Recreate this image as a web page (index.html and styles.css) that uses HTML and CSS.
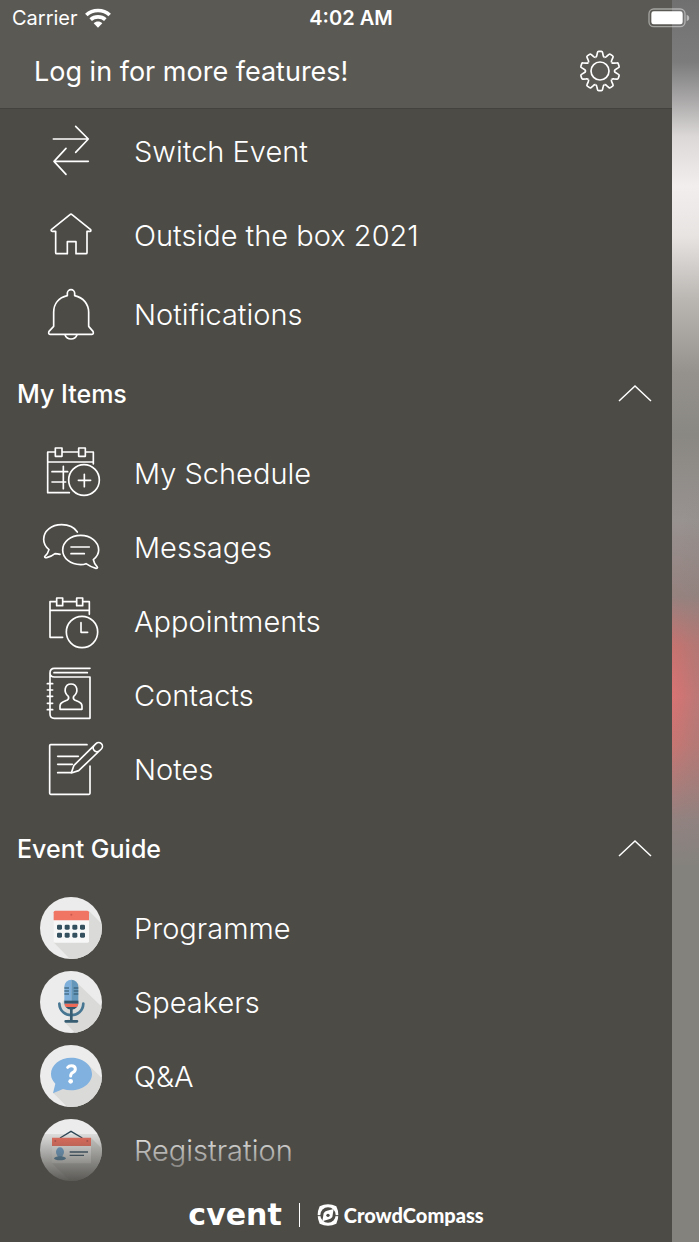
FILE: index.html
```html
<!DOCTYPE html>
<html lang="en">
<head>
<meta charset="utf-8">
<meta name="viewport" content="width=device-width, initial-scale=1">
<title>Event menu</title>
<link rel="stylesheet" href="styles.css">
</head>
<body>
<div class="screen">
  <div class="status">
    <div class="carrier">Carrier
      <svg class="wifi" viewBox="0 0 78 58" aria-hidden="true"><path d="M4 20C23 2 55 2 74 20M17 34C29 23 49 23 61 34"/><path class="dot" d="M26 45C33 38 45 38 52 45L39 58Z"/></svg>
    </div>
    <div class="time">4:02 AM</div>
    <svg class="battery" viewBox="0 0 126 60" aria-hidden="true"><rect class="case" x="3" y="3" width="108" height="53" rx="14"/><rect class="charge" x="10" y="10" width="94" height="39" rx="7"/><path class="nub" d="M116 20Q124 23 124 30T116 40Z"/></svg>
  </div>

  <div class="drawer">
    <header class="header">
      <a class="login" href="#login">Log in for more features!</a>
      <button class="settings" type="button" aria-label="Settings">
        <svg viewBox="-63 -63 126 126" aria-hidden="true">
          <defs><path id="tooth" d="M-13.3 -41Q-10 -43 -9.5 -47L-7.5 -56Q-7 -59 -4 -59H4Q7 -59 7.500 -56L9.500 -47Q10 -43 13.300 -41"/></defs>
          <use href="#tooth"/><use href="#tooth" transform="rotate(36)"/><use href="#tooth" transform="rotate(72)"/><use href="#tooth" transform="rotate(108)"/><use href="#tooth" transform="rotate(144)"/><use href="#tooth" transform="rotate(180)"/><use href="#tooth" transform="rotate(216)"/><use href="#tooth" transform="rotate(252)"/><use href="#tooth" transform="rotate(288)"/><use href="#tooth" transform="rotate(324)"/>
          <circle r="27"/>
        </svg>
      </button>
    </header>

    <nav class="menu">
      <a class="item tall" href="#switch">
        <svg class="icon line" viewBox="0 0 186 186" aria-hidden="true"><path d="M40 57H145M107 19L145 57L107 97M145 124H43M78 85L42 124L78 163"/></svg>
        <span>Switch Event</span>
      </a>
      <a class="item tall" href="#home">
        <svg class="icon line" viewBox="0 0 186 186" aria-hidden="true"><path d="M90 32Q93 29 96 32L152 77Q154 82 150 82H141V146Q141 149 138 149H108V113H82V149H50Q47 149 47 146V82H37Q32 82 34 77Z"/></svg>
        <span>Outside the box 2021</span>
      </a>
      <a class="item" href="#notifications">
        <svg class="icon line" viewBox="0 0 186 186" aria-hidden="true"><path d="M82 38V31A11 11 0 0 1 104 31V38C130 44 146 63 146 88V130L159 145Q162 154 156 154H30Q24 154 27 145L41 130V88C41 63 56 44 82 38ZM75 156Q80 168 93 168Q106 168 111 156"/></svg>
        <span>Notifications</span>
      </a>

      <button class="section" type="button" aria-expanded="true">My Items
        <svg class="chevron" viewBox="0 0 34 20" aria-hidden="true"><path d="M1 17L17 2L33 17"/></svg>
      </button>
      <a class="item" href="#schedule">
        <svg class="icon line" viewBox="0 0 186 186" aria-hidden="true"><path d="M46 30H23V152H88M66 30H116M136 30H160V66M23 60H160M46 18H66V43H46ZM116 18H136V43H116ZM36 89H83M36 120H77M70 73V140M115 115H152M133 97V134"/><circle cx="132" cy="114" r="46"/></svg>
        <span>My Schedule</span>
      </a>
      <a class="item" href="#messages">
        <svg class="icon line" viewBox="0 0 186 186" aria-hidden="true"><path d="M112 48C103 34 86 26 65 26C34 26 11 45 11 70C11 83 17 93 27 101Q24 113 14 122Q14 126 20 125Q34 122 45 113Q52 113 60 115M160 131C170 123 176 113 176 102C176 77 152 58 122 58C92 58 68 77 68 102C68 127 92 146 122 146Q131 146 138 143Q152 153 168 157Q174 157 172 153Q162 143 160 131ZM93 93H148M93 113H133"/></svg>
        <span>Messages</span>
      </a>
      <a class="item" href="#appointments">
        <svg class="icon line" viewBox="0 0 186 186" aria-hidden="true"><path d="M50 35H30V142H68M68 35H110M128 35H148V73M30 61H148M50 24H68V47H50ZM110 24H128V47H110ZM123 98V127H143"/><circle cx="126" cy="126" r="47"/></svg>
        <span>Appointments</span>
      </a>
      <a class="item" href="#contacts">
        <svg class="icon line" viewBox="0 0 186 186" aria-hidden="true"><path d="M150 13H43Q30 13 30 27V150Q30 163 43 163H150V39H43Q30 39 30 27M42 26H142M22 59H38M22 78H38M22 97H38M22 118H38M22 137H38M60 136V126Q60 117 70 113L82 108Q88 104 85 97C69 84 74 60 93 60C112 60 117 84 101 97Q98 104 104 108L116 113Q126 117 126 126V136Z"/></svg>
        <span>Contacts</span>
      </a>
      <a class="item" href="#notes">
        <svg class="icon line" viewBox="0 0 186 186" aria-hidden="true"><path d="M141 20H32Q29 20 29 23V166Q29 169 32 169H147Q150 169 150 166V84M53 55H115M53 79H97M53 104H94L102 82L168 17A11 11 0 0 1 184 33L116 98L94 105M163 22A11 11 0 0 0 179 38"/></svg>
        <span>Notes</span>
      </a>

      <button class="section" type="button" aria-expanded="true">Event Guide
        <svg class="chevron" viewBox="0 0 34 20" aria-hidden="true"><path d="M1 17L17 2L33 17"/></svg>
      </button>
      <a class="item" href="#programme">
        <svg class="icon" viewBox="0 0 186 186" aria-hidden="true">
          <defs><clipPath id="disc"><circle cx="93" cy="93" r="93"/></clipPath></defs>
          <g clip-path="url(#disc)"><rect width="186" height="186" fill="#ececec"/><path d="M147 42L186 81V186H90L42 137Z" fill="#dadad8"/></g>
          <path d="M41 68H147V133Q147 137 143 137H45Q41 137 41 133Z" fill="#f7f7f7"/><path d="M41 70V46Q41 41 46 41H142Q147 41 147 46V70Z" fill="#f17563"/><circle cx="94" cy="53" r="3" fill="#c95a50"/>
          <g fill="#34505f"><rect x="51" y="83" width="15" height="15" rx="4"/><rect x="74" y="83" width="15" height="15" rx="4"/><rect x="97" y="83" width="15" height="15" rx="4"/><rect x="120" y="83" width="15" height="15" rx="4"/><rect x="51" y="107" width="15" height="15" rx="4"/><rect x="74" y="107" width="15" height="15" rx="4"/><rect x="97" y="107" width="15" height="15" rx="4"/><rect x="120" y="107" width="15" height="15" rx="4"/></g>
        </svg>
        <span>Programme</span>
      </a>
      <a class="item" href="#speakers">
        <svg class="icon" viewBox="0 0 186 186" aria-hidden="true">
          <g clip-path="url(#disc)"><rect width="186" height="186" fill="#ececec"/><path d="M108 32L186 108V186H106L74 154L90 138L60 105Z" fill="#dadad8"/></g>
          <path d="M73 47A21 21 0 0 1 94 26V115A21 18 0 0 1 73 97Z" fill="#7fb0dc"/><path d="M94 26A21 21 0 0 1 115 47V97A21 18 0 0 1 94 115Z" fill="#6597ba"/>
          <path d="M73 51H87M73 60H87M73 69H87M101 51H115M101 60H115M101 69H115" stroke="#2f5064" stroke-width="3"/>
          <path d="M73 89H115V98H73Z" fill="#34566a"/><path d="M73 98H115Q114 104 111 108H77Q74 104 73 98Z" fill="#ef6a57"/><path d="M77 108H111Q105 116 94 116T77 108Z" fill="#34566a"/>
          <path d="M58 98C60 144 128 144 130 98" fill="none" stroke="#467692" stroke-width="8" stroke-linecap="round"/><path d="M94 114V149M77 151H111" stroke="#365d72" stroke-width="8" stroke-linecap="round"/>
        </svg>
        <span>Speakers</span>
      </a>
      <a class="item" href="#qa">
        <svg class="icon" viewBox="0 0 186 186" aria-hidden="true">
          <g clip-path="url(#disc)"><rect width="186" height="186" fill="#ececec"/><path d="M140 54L186 100V186H82L40 144Z" fill="#dadad8"/></g>
          <path d="M39 145L46 116Q33 103 33 87C33 60 60 38 94 38S156 60 156 87S128 136 94 136Q80 136 69 132Z" fill="#80b1df"/>
          <path d="M83 67Q87 62 94 62Q106 62 106 72Q106 79 98 83Q92 86 92 93" fill="none" stroke="#fff" stroke-width="9" stroke-linecap="round"/><circle cx="92" cy="109" r="7" fill="#fff"/>
        </svg>
        <span>Q&amp;A</span>
      </a>
      <a class="item" href="#registration">
        <svg class="icon" viewBox="0 0 186 186" aria-hidden="true">
          <g clip-path="url(#disc)"><rect width="186" height="186" fill="#ececec"/><path d="M153 56L186 89V186H90L36 133Z" fill="#d6d6d4"/></g>
          <path d="M60 57L93 37L127 57" fill="none" stroke="#2c4656" stroke-width="4"/><path d="M36 78H153V133H36Z" fill="#f5f5f5"/><path d="M36 56H153V81H36Z" fill="#f0705f"/><circle cx="46" cy="66" r="3" fill="#b8584e"/><circle cx="142" cy="66" r="3" fill="#b8584e"/>
          <g fill="#70a8d8"><ellipse cx="60" cy="99" rx="12" ry="14"/><path d="M53 105H67V118H53Z"/></g><ellipse cx="60" cy="118" rx="18" ry="6" fill="#4a84ac"/>
          <path d="M89 99H144M89 109H132" stroke="#34506a" stroke-width="4"/>
        </svg>
        <span>Registration</span>
      </a>
    </nav>

    <footer class="footer">
      <span class="cvent">cvent</span>
      <span class="divider"></span>
      <span class="crowd">
        <svg viewBox="0 0 66 66" aria-hidden="true"><path class="badge" d="M8 7Q33 -5 58 7Q70 33 58 59Q33 71 8 59Q-4 33 8 7Z"/><circle class="dial" cx="33" cy="33" r="23"/><path class="ticks" d="M0 35H12M54 35H66"/><path class="needle" d="M50 15L46 39Q42 45 36 46L16 52L20 28Q24 21 30 20Z"/><circle class="hub" cx="33" cy="34" r="5"/></svg>
        CrowdCompass
      </span>
    </footer>
  </div>
  <div class="backdrop"></div>
</div>
</body>
</html>
```
FILE: styles.css
```css
* { box-sizing: border-box; }

body {
  margin: 0;
  background: #4c4b46;
  color: #fff;
  font-family: Inter, "Liberation Sans", sans-serif;
}

a { color: inherit; text-decoration: none; }

button {
  border: 0;
  padding: 0;
  background: none;
  color: inherit;
  font-family: inherit;
}

svg { display: block; flex: none; overflow: visible; }

.screen {
  position: relative;
  display: flex;
  min-height: 100vh;
}

/* Status bar spans the drawer and the page behind it */
.status {
  position: absolute;
  inset: 0 0 auto 0;
  z-index: 2;
  display: grid;
  grid-template-columns: 1fr auto 1fr;
  align-items: center;
  height: 35px;
  padding: 0 9px 0 12px;
  font-size: 20px;
}
.carrier { display: flex; align-items: center; gap: 7px; }
.wifi { width: 26px; height: 20px; }
.wifi path { fill: none; stroke: #fff; stroke-width: 11; }
.wifi .dot { fill: #fff; stroke: none; }
.time { font-weight: 600; }
.battery { justify-self: end; width: 42px; height: 20px; }
.case { fill: none; stroke: #fff; stroke-opacity: .45; stroke-width: 4; }
.charge { fill: #fff; }
.nub { fill: #fff; fill-opacity: .5; }

.drawer {
  flex: 1;
  display: flex;
  flex-direction: column;
  background: #4c4b46;
}

.header {
  display: flex;
  align-items: center;
  justify-content: space-between;
  padding: 34px 51px 0 34px;
  height: 109px;
  background: #5a5954;
  border-bottom: 1px solid #43423e;
}
.login { font-size: 27px; }
.settings svg { width: 42px; height: 42px; fill: none; stroke: #fff; stroke-width: 5; }

.menu { flex: 1; display: flex; flex-direction: column; }

.item {
  display: flex;
  align-items: center;
  gap: 32px;
  height: 74px;
  padding-left: 40px;
  font-size: 29px;
  font-weight: 300;
}
.tall { height: 84px; }
.icon { width: 62px; height: 62px; }
.line {
  fill: none;
  stroke: #fff;
  stroke-width: 5;
  stroke-linecap: round;
  stroke-linejoin: round;
}

.section {
  display: flex;
  align-items: center;
  justify-content: space-between;
  height: 85px;
  padding: 0 20px 0 17px;
  font-size: 25px;
  font-weight: 500;
}
.chevron { width: 34px; height: 20px; fill: none; stroke: #fff; stroke-width: 1.5; }

.footer {
  position: relative;
  display: flex;
  align-items: center;
  justify-content: center;
  gap: 17px;
  height: 55px;
  background: #4c4b46;
}
.footer::before {
  content: "";
  position: absolute;
  inset: auto 0 100% 0;
  height: 53px;
  background: linear-gradient(rgba(76, 75, 70, .1), #4c4b46);
}
.cvent { font: bold 30px/40px "DejaVu Sans", sans-serif; }
.divider { width: 1px; height: 24px; background: #fff; }
.crowd {
  display: flex;
  align-items: center;
  gap: 5px;
  font: 900 20px/24px Lato, sans-serif;
}
.crowd svg { width: 22px; height: 22px; }
.badge, .needle { fill: #fff; }
.dial, .hub { fill: #4c4b46; }
.ticks { stroke: #4c4b46; stroke-width: 3; }

/* Blurred page showing beside the drawer */
.backdrop {
  flex: none;
  width: 27px;
  background:
    radial-gradient(ellipse 27px 220px at 100% 56%, rgba(131, 130, 125, .35), transparent),
    linear-gradient(#707070 0%, #7c7c7c 5%, #a9a7a7 8%, #dcd8d8 11%, #f2eeee 15%, #e8e4e2 19%, #bbb7b3 24%, #95928d 30%, #8a8883 35%, #989290 42%, #96827f 48%, #c77370 52%, #d97373 56%, #c77673 60%, #928280 66%, #83827d 70%, #83827d 100%);
}
```
